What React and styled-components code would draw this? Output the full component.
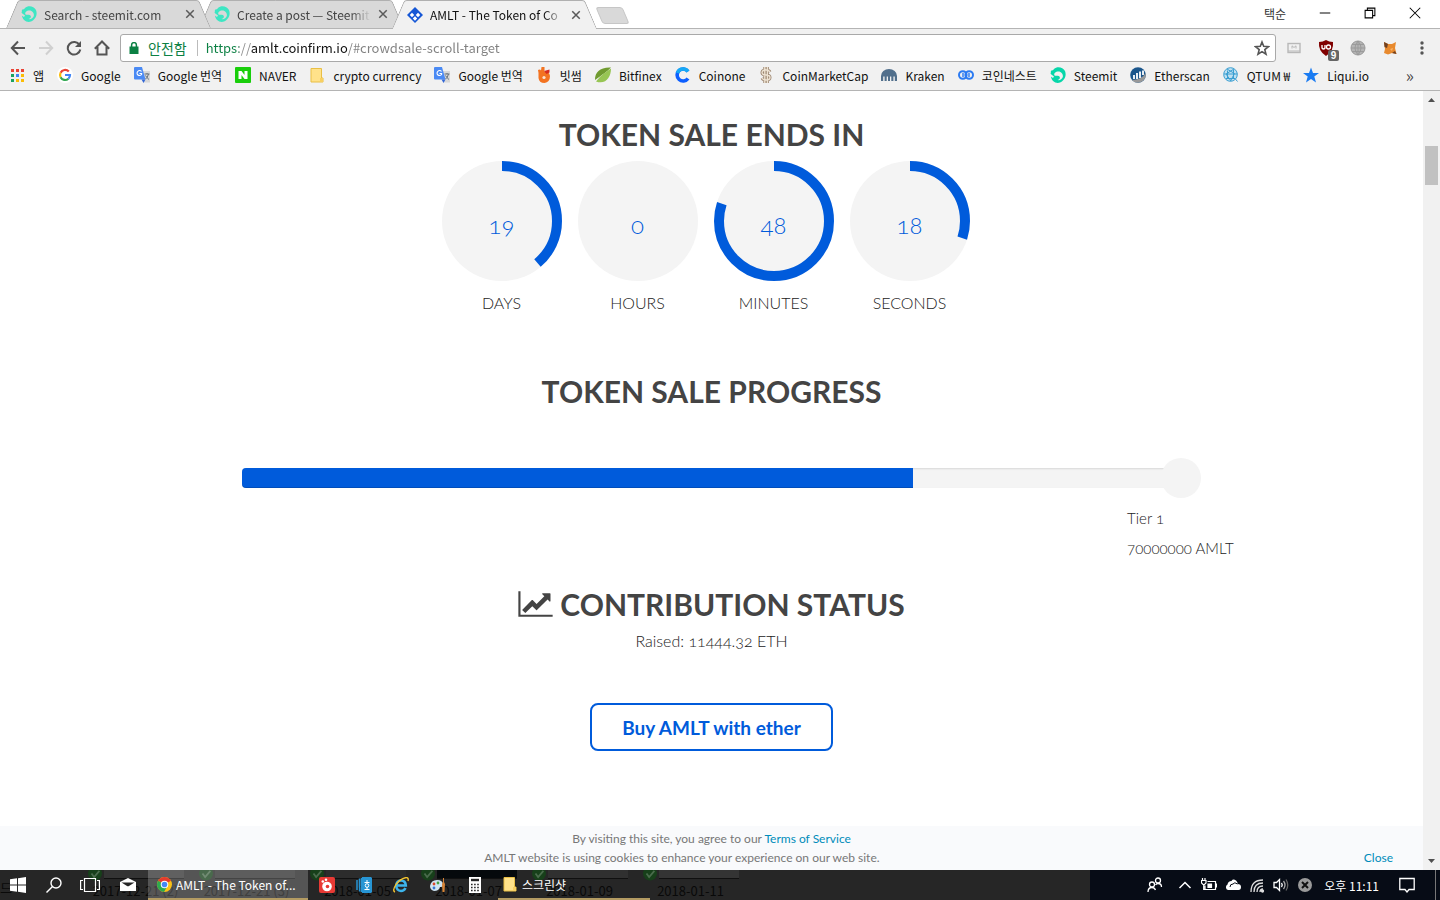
import { useState } from 'react';
import styled, { createGlobalStyle } from 'styled-components';

const uiFont = `'Noto Sans CJK KR', 'Noto Sans', sans-serif`;
const siteFont = `Lato, 'Open Sans', sans-serif`;
const blue = '#005bdb';

const GlobalStyle = createGlobalStyle`
  * { box-sizing: border-box; }
  body {
    margin: 0;
    background: #fff;
    color: #444;
    font-family: ${siteFont};
  }
  button { font: inherit; color: inherit; border: 0; background: none; padding: 0; cursor: pointer; }
  a { text-decoration: none; }
  h2, p { margin: 0; }
  svg { display: block; flex: none; }
`;

// Browser window
const Window = styled.div`
  min-height: 100vh;
  display: flex;
  flex-direction: column;
  overflow: hidden;
`;

const TabStrip = styled.div`
  display: flex;
  align-items: flex-start;
  height: 29px;
  padding-left: 12px;
  border-bottom: 1px solid #b4b4b4;
  font-family: ${uiFont};
`;

const Tab = styled.div`
  position: relative;
  isolation: isolate;
  z-index: ${(p) => p.$order};
  display: flex;
  align-items: center;
  gap: 7px;
  width: 193px;
  height: ${(p) => (p.$active ? 29 : 28)}px;
  padding: 0 10px 0 9px;
  font-size: 12px;
  color: ${(p) => (p.$active ? '#111' : '#444')};

  &::before,
  &::after {
    content: '';
    position: absolute;
    z-index: -1;
    top: 0;
    bottom: 0;
    width: 60%;
    background: ${(p) => (p.$active ? '#f1f1f1' : '#d9d9d9')};
    border-top: 1px solid #b0b0b0;
  }
  &::before {
    left: 0;
    border-left: 1px solid #a5a5a5;
    border-top-left-radius: 3px;
    transform: skewX(-23deg);
  }
  &::after {
    right: 0;
    border-right: 1px solid #a5a5a5;
    border-top-right-radius: 3px;
    transform: skewX(23deg);
  }
`;

const TabTitle = styled.span`
  flex: 1;
  overflow: hidden;
  white-space: nowrap;
  mask-image: linear-gradient(to right, #000 85%, transparent);
`;

const NewTab = styled.button`
  width: 27px;
  height: 17px;
  margin: 7px 0 0 8px;
  border: 1px solid #c6c6c6;
  border-radius: 3px;
  background: #d9d9d9;
  transform: skewX(23deg);
`;

const WindowControls = styled.div`
  display: flex;
  align-items: center;
  height: 26px;
  margin-left: auto;
  padding-right: 19px;
  gap: 33px;
  font-size: 12px;
  color: #333;
`;

const Toolbar = styled.div`
  display: flex;
  align-items: center;
  height: 33px;
  padding: 4px 10px 0;
  gap: 12px;
  background: #f1f1f1;
`;

const Omnibox = styled.div`
  flex: 1;
  display: flex;
  align-items: center;
  gap: 8px;
  height: 28px;
  margin: 0 -2px;
  padding: 0 5px 0 7px;
  border: 1px solid #a9a9a9;
  border-radius: 3px;
  background: #fff;
  font-family: ${uiFont};
  font-size: 14px;
`;

const Secure = styled.span`
  padding-right: 10px;
  border-right: 1px solid #bbb;
  line-height: 16px;
  color: #0b8043;
`;

const Address = styled.input`
  flex: 1;
  min-width: 0;
  padding: 0;
  border: 0;
  outline: 0;
  font: inherit;
  font-size: 13px;
  color: transparent;
  background: linear-gradient(to right, #0b8043 33px, #888 33px 45px, #111 45px 141px, #808080 141px) text;
`;

const Extensions = styled.div`
  display: flex;
  align-items: center;
  gap: 16px;
`;

const Shield = styled.span`
  position: relative;
`;

const Badge = styled.span`
  position: absolute;
  top: 10px;
  left: 10px;
  width: 11px;
  border-radius: 2px;
  background: #666;
  color: #fff;
  font: 700 10px/11px 'Liberation Sans', sans-serif;
  text-align: center;
`;

const Bookmarks = styled.nav`
  display: flex;
  align-items: center;
  gap: 13px;
  height: 29px;
  padding: 0 22px 2px 9px;
  background: #f1f1f1;
  border-bottom: 1px solid #b4b4b4;
  font-family: ${uiFont};
  font-size: 12px;
  white-space: nowrap;
`;

const Bookmark = styled.a`
  display: flex;
  align-items: center;
  gap: 8px;
  color: #111;
`;

const More = styled.button`
  margin: 0 4px 0 auto;
  font-size: 17px;
  line-height: 20px;
  color: #444;
`;

// Page
const Viewport = styled.div`
  flex: 1;
  display: flex;
`;

const Site = styled.div`
  flex: 1;
  display: flex;
  flex-direction: column;
`;

const Main = styled.main`
  flex: 1;
  display: flex;
  flex-direction: column;
  align-items: center;
  padding-top: 26px;
`;

const Heading = styled.h2`
  display: flex;
  align-items: center;
  gap: 7px;
  margin-top: ${(p) => p.$space}px;
  font-size: 30px;
  line-height: 34px;
  font-weight: 700;
`;

const Countdown = styled.div`
  display: flex;
  gap: 16px;
  margin-top: 10px;
  padding-right: 12px;
`;

const Unit = styled.div`
  text-align: center;
  font-size: 16px;
  font-weight: 300;
  line-height: 24px;
  color: #222;
`;

const Dial = styled.div`
  display: grid;
  place-items: center;
  width: 120px;
  height: 120px;
  margin-bottom: 10px;
  > * { grid-area: 1 / 1; }
`;

const DialValue = styled.span`
  padding-top: 8px;
  font-size: 24px;
  font-variant-numeric: oldstyle-nums;
  color: ${blue};
`;

const Progress = styled.div`
  width: 66%;
  margin-top: 60px;
`;

const Track = styled.div`
  position: relative;
  height: 20px;
  border-radius: 4px;
  background: #f4f4f4;
  box-shadow: inset 0 1px 2px rgba(0, 0, 0, 0.12);
`;

const Fill = styled.div`
  height: 100%;
  border-radius: 4px 0 0 4px;
  background: ${blue};
  box-shadow: inset 0 -1px 0 rgba(0, 0, 0, 0.15);
`;

const TierDot = styled.span`
  position: absolute;
  top: -10px;
  right: -20px;
  width: 40px;
  height: 40px;
  border-radius: 50%;
  background: #f4f4f4;
`;

const Tier = styled.div`
  width: 108px;
  margin: 15px -54px 0 auto;
  font-size: 15px;
  font-weight: 300;
  line-height: 30px;
  color: #222;
  white-space: nowrap;
  font-variant-numeric: oldstyle-nums;
`;

const Raised = styled.p`
  margin-top: 8px;
  font-size: 16px;
  font-weight: 300;
  line-height: 24px;
  color: #222;
  font-variant-numeric: oldstyle-nums;
`;

const BuyButton = styled.button`
  height: 48px;
  margin-top: 50px;
  padding: 0 30px;
  border: 2px solid ${blue};
  border-radius: 8px;
  font-size: 19px;
  font-weight: 700;
  color: ${blue};
`;

const CookieBar = styled.footer`
  padding: 3px 30px 3px 0;
  background: #f9fafc;
  font-size: 12px;
  line-height: 19px;
  color: #777;
  text-align: center;

  a, button { color: #008cba; }
`;

const CookieTerms = styled.p`
  padding-left: 30px;
`;

const CookieRow = styled.div`
  display: flex;
  p { flex: 1; }
`;

const Scrollbar = styled.div`
  display: flex;
  flex-direction: column;
  align-items: center;
  width: 17px;
  padding: 7px 0;
  background: #f1f1f1;
`;

const Thumb = styled.div`
  width: 13px;
  height: 39px;
  margin: 44px 0 auto;
  background: #c1c1c1;
`;

// Taskbar
const Taskbar = styled.div`
  position: relative;
  isolation: isolate;
  display: flex;
  height: 30px;
  background: #262626;
  color: #fff;
  font-family: ${uiFont};
  font-size: 12px;
`;

const Behind = styled.div`
  position: absolute;
  z-index: -1;
  inset: 0;
  display: flex;
  overflow: hidden;
  color: #090909;
  font-size: 13px;
  line-height: 15px;
`;

const Cell = styled.div`
  display: flex;
  flex-direction: column;
  align-items: ${(p) => (p.$first ? 'flex-start' : 'center')};
  width: ${(p) => (p.$first ? 80 : 111)}px;
  padding-top: ${(p) => (p.$first ? 10 : 0)}px;
  white-space: nowrap;
`;

const Preview = styled.div`
  display: flex;
  width: 96px;
  height: 13px;
  gap: 2px;

  &::after {
    content: '';
    flex: 1;
    height: 8px;
    background: ${(p) => p.$tone};
    border-bottom: 1px solid #101010;
  }
`;

const TaskButton = styled.button`
  display: flex;
  align-items: center;
  justify-content: center;
  width: ${(p) => (p.$wide ? 40 : 36)}px;
`;

const AppButton = styled.button`
  display: flex;
  align-items: center;
  justify-content: center;
  width: 37px;
`;

const OpenApp = styled.button`
  display: flex;
  align-items: center;
  gap: 4px;
  width: ${(p) => (p.$active ? 160 : 152)}px;
  margin-left: ${(p) => (p.$active ? 0 : 5)}px;
  padding: 0 8px 0 ${(p) => (p.$active ? 9 : 4)}px;
  border-bottom: 2px solid #b39b62;
  background: ${(p) => (p.$active ? 'rgba(255, 255, 255, 0.22)' : 'none')};
  white-space: nowrap;
`;

const Tray = styled.div`
  display: flex;
  align-items: center;
  gap: 8px;
  margin-left: auto;
  padding: 0 20px 0 57px;
  background: #070c16;
`;

const People = styled.button`
  margin-right: 6px;
`;

const Clock = styled.span`
  margin: 0 12px 0 3px;
`;

const ShowDesktop = styled.button`
  width: 5px;
  border-left: 1px solid #777;
  background: #070c16;
`;

const Stroke = ({ size = 16, color = '#555', width = 2, children }) => (
  <svg width={size} height={size} viewBox="0 0 16 16" fill="none" stroke={color} strokeWidth={width}>
    {children}
  </svg>
);

const Pic = ({ size = 16, children }) => (
  <svg width={size} height={size} viewBox="0 0 16 16">{children}</svg>
);

const SteemIcon = ({ color = '#3ee6c3', inner = '#d9d9d9' }) => (
  <Pic>
    <path d="M1 5C0 3 3 4 4 2C7-1 13 0 15 4C17 9 14 14 10 15.500C6 17 1 14 1 9C1 8 0 7 1 5Z" fill={color} />
    <path d="M4.500 8.500C3.500 6.500 5.500 4.500 8.500 4.500C11 4.500 13.500 7 12.800 10C12 12.500 9.500 13.500 7.500 13C9.500 12.500 10.500 11 9.500 9.500C8.500 8 6 9.500 4.500 8.500Z" fill={inner} />
    <path d="M0 6.500L4 9.500L3 11L0 9Z" fill={inner} />
  </Pic>
);

const AmltIcon = () => (
  <Pic>
    <path d="M8 0L16 8L8 16L0 8Z" fill="#1557d6" />
    <path d="M5 5.800L7.200 8L5 10.200L2.800 8ZM11 5.800L13.200 8L11 10.200L8.800 8ZM8 9.300L10.200 11.500L8 13.700L5.800 11.500Z" fill="#fff" />
  </Pic>
);

const CloseIcon = () => (
  <Stroke size={10} color="#5a5a5a" width={2.4}><path d="M2 2L14 14M14 2L2 14" /></Stroke>
);

const AppsIcon = () => (
  <Pic>
    {['#ea4335', '#ea4335', '#ea4335', '#1ba260', '#4285f4', '#fbbc05', '#1ba260', '#fbbc05', '#fbbc05'].map((c, i) => (
      <rect key={i} x={2 + (i % 3) * 5} y={2 + Math.floor(i / 3) * 5} width="3" height="3" fill={c} />
    ))}
  </Pic>
);

const GoogleIcon = () => (
  <Pic>
    <circle cx="8" cy="8" r="8" fill="#fff" />
    <g fill="none" strokeWidth="2.200">
      <path d="M11.800 4.600A5 5 0 0 0 3.600 5.800" stroke="#ea4335" />
      <path d="M3.600 5.800A5 5 0 0 0 3.600 10.200" stroke="#fbbc05" />
      <path d="M3.600 10.200A5 5 0 0 0 11.400 11.700" stroke="#34a853" />
      <path d="M11.400 11.700A5 5 0 0 0 13 8H8" stroke="#4285f4" />
    </g>
  </Pic>
);

const TranslateIcon = () => (
  <Pic>
    <path d="M6 4H16V15.500H10Z" fill="#d8d8d8" />
    <path d="M0 1Q0 0 1 0H8L11.500 12.500H1Q0 12.500 0 11.500Z" fill="#4a8af4" />
    <path d="M7.500 12.500H11.500L9.500 16Z" fill="#3367d6" />
    <path d="M7.500 4.500A2.500 2.500 0 1 0 7.600 7.500V6.500H5.500" fill="none" stroke="#fff" strokeWidth="1.100" />
    <path d="M10.500 7H15.500M13 6V7M14.500 7Q13.500 11 11.500 12M11.500 8.500Q13 11 15 12.500" fill="none" stroke="#68737c" />
  </Pic>
);

const NaverIcon = () => (
  <Pic>
    <rect width="16" height="16" rx="1" fill="#19ce0b" />
    <path d="M3.500 4H6.500L9.500 8V4H12.500V12H9.500L6.500 8V12H3.500Z" fill="#fff" />
  </Pic>
);

const FolderIcon = () => (
  <Pic>
    <path d="M2 1.500H12.500V11H14V15H2Z" fill="#ffe28a" stroke="#e9bf45" />
    <path d="M11 15V11H14V15Z" fill="#f8d061" />
  </Pic>
);

const BithumbIcon = () => (
  <Pic>
    <path d="M2 3Q4 2 5 3.500L5.500 0H8.500V5Q13 4 14 9Q14 15 8.500 16Q3 16 2.500 11V6Z" fill="#f37321" />
    <path d="M8 4L13.500 2.500V5.500L10.500 7Z" fill="#d62d20" />
    <circle cx="8" cy="10.500" r="1.600" fill="#fbe3d2" />
  </Pic>
);

const BitfinexIcon = () => (
  <Pic>
    <path d="M0 13C0 5 5 0 16 .500C12 5 8 7 0 13Z" fill="#709b30" />
    <path d="M1 14.500C7 7 11 5 16 1.500C16 10 11 18 1 14.500Z" fill="#97c554" />
  </Pic>
);

const CoinoneIcon = () => (
  <Stroke color="#0d5fff" width={3.6}>
    <path d="M13 4.500A6 6 0 1 0 13 11.500" />
    <path d="M2.500 6A6 6 0 0 1 13 4.500" stroke="#16a8f5" />
  </Stroke>
);

const DollarIcon = () => (
  <Pic>
    <g fill="none">
      <path d="M12 5Q11 3 8 3Q4 3 4 5.500Q4 8 8 8Q12 8 12 10.500Q12 13 8 13Q5 13 4 11M6.800 0V16M9.400 0V16" stroke="#9b8570" strokeWidth="3" />
      <path d="M12 5Q11 3 8 3Q4 3 4 5.500Q4 8 8 8Q12 8 12 10.500Q12 13 8 13Q5 13 4 11M6.800 0V16M9.400 0V16" stroke="#eee3d2" strokeWidth="1.400" />
    </g>
  </Pic>
);

const KrakenIcon = () => (
  <Pic>
    <path d="M0 14V9A8 7 0 0 1 16 9V14H13.800V9.500H12.400V14H10.300V9.500H9V14H7V9.500H5.700V14H3.600V9.500H2.200V14Z" fill="#516f8c" />
  </Pic>
);

const CoinnestIcon = () => (
  <Stroke color="#2c7bf2" width={2}>
    <circle cx="4.800" cy="8" r="3.800" /><circle cx="11.200" cy="8" r="3.800" /><path d="M5 6V10M11 6V10" strokeWidth="1.400" />
  </Stroke>
);

const EtherscanIcon = () => (
  <Pic>
    <circle cx="8" cy="8" r="7.800" fill="#1b568c" />
    <path d="M1 13Q12 13 15.500 6Q17 12 11 15Q5 17 2 13Z" fill="#999" />
    <path d="M4 8V12M7 6V12M10 4.500V11M13 3.500V8" stroke="#fff" strokeWidth="1.800" />
  </Pic>
);

const GlobeLines = ({ fill, line }) => (
  <Pic>
    <circle cx="8" cy="8" r="7" fill={fill} stroke={line} />
    <path d="M1 8H15M2 4.500H14M2 11.500H14M8 1V15M8 1Q2 8 8 15M8 1Q14 8 8 15" fill="none" stroke={line} strokeWidth=".900" />
  </Pic>
);

const QtumIcon = () => (
  <Pic>
    <circle cx="7.500" cy="7.500" r="6.800" fill="#bfe0f1" stroke="#3b9fd2" />
    <path d="M4 2L11.500 6.500L7.500 14M11 2L3 7L8 14M1 7H14.500M3 11.500H12L14.500 14.500M4.500 3.500V12M10.500 3V12" fill="none" stroke="#3b9fd2" />
  </Pic>
);

const StarIcon = () => (
  <Pic><path d="M8 .500L10 6H16L11.300 9.500L13 15.500L8 12L3 15.500L4.700 9.500L0 6H6Z" fill="#1a7bf2" /></Pic>
);

const ChromeIcon = () => (
  <Pic size={15}>
    <circle cx="8" cy="8" r="8" fill="#fbc116" />
    <path d="M8 8L1.100 4A8 8 0 0 1 14.900 4Z" fill="#e33b2e" />
    <path d="M8 8L1.100 4A8 8 0 0 0 7.500 16L11 9.500Z" fill="#2da94f" />
    <circle cx="8" cy="8" r="4" fill="#fff" />
    <circle cx="8" cy="8" r="3" fill="#4587f3" />
  </Pic>
);

const ChartIcon = () => (
  <svg width="35" height="30" viewBox="0 0 2048 1792" fill="#444">
    <path d="M2048 1536v128h-2048v-1536h128v1408h1920zm-128-1248v435q0 21-19.500 29.500t-35.500-7.500l-121-121-633 633q-10 10-23 10t-23-10l-233-233-416 416-192-192 585-585q10-10 23-10t23 10l233 233 464-464-121-121q-16-16-7.500-35.500t29.500-19.500h435q14 0 23 9t9 23z" />
  </svg>
);

const CheckBadge = () => (
  <Pic size={14}>
    <circle cx="8" cy="4" r="8" fill="#17401a" />
    <path d="M4 4L7 8L13 1" fill="none" stroke="#4a6b4c" strokeWidth="2" />
  </Pic>
);

const tabs = [
  { title: 'Search - steemit.com', icon: <SteemIcon /> },
  { title: 'Create a post — Steemit', icon: <SteemIcon /> },
  { title: 'AMLT - The Token of Co', icon: <AmltIcon />, active: true },
];

const bookmarks = [
  ['앱', <AppsIcon />],
  ['Google', <GoogleIcon />],
  ['Google 번역', <TranslateIcon />],
  ['NAVER', <NaverIcon />],
  ['crypto currency', <FolderIcon />],
  ['Google 번역', <TranslateIcon />],
  ['빗썸', <BithumbIcon />],
  ['Bitfinex', <BitfinexIcon />],
  ['Coinone', <CoinoneIcon />],
  ['CoinMarketCap', <DollarIcon />],
  ['Kraken', <KrakenIcon />],
  ['코인네스트', <CoinnestIcon />],
  ['Steemit', <SteemIcon color="#06d6a9" inner="#f1f1f1" />],
  ['Etherscan', <EtherscanIcon />],
  ['QTUM ₩', <QtumIcon />],
  ['Liqui.io', <StarIcon />],
];

const units = [
  { label: 'DAYS', value: 19, max: 49 },
  { label: 'HOURS', value: 0, max: 24 },
  { label: 'MINUTES', value: 48, max: 60 },
  { label: 'SECONDS', value: 18, max: 60 },
];

const files = [
  ['2017-12-21 (2)', '#343434'],
  ['2017-12-21 (3)', '#303030'],
  ['2018-01-05', '#2c2c2c'],
  ['2018-01-07', '#05090c'],
  ['2018-01-09', '#303030'],
  ['2018-01-11', '#343434'],
];

// circumference of the r=55 ring
const ring = 2 * Math.PI * 55;

const App = () => {
  const [url, setUrl] = useState('https://amlt.coinfirm.io/#crowdsale-scroll-target');
  const [showCookies, setShowCookies] = useState(true);

  return (
    <Window>
      <GlobalStyle />
      <TabStrip>
        {tabs.map((tab, i) => (
          <Tab key={tab.title} $active={tab.active} $order={tab.active ? 5 : 3 - i}>
            {tab.icon}
            <TabTitle>{tab.title}</TabTitle>
            <button aria-label="Close tab"><CloseIcon /></button>
          </Tab>
        ))}
        <NewTab aria-label="New tab" />
        <WindowControls>
          <span>택순</span>
          <button aria-label="Minimize"><Stroke size={12} color="#000" width={1.3}><path d="M1 8H15" /></Stroke></button>
          <button aria-label="Restore"><Stroke size={12} color="#000" width={1.4}><path d="M1.500 4.500H11.500V14.500H1.500ZM4.500 4.500V1.500H14.500V11.500H11.500" /></Stroke></button>
          <button aria-label="Close"><Stroke size={12} color="#000" width={1.4}><path d="M1 1L15 15M15 1L1 15" /></Stroke></button>
        </WindowControls>
      </TabStrip>

      <Toolbar>
        <button aria-label="Back"><Stroke><path d="M15 8H2M8 1.500L1.800 8L8 14.500" /></Stroke></button>
        <button aria-label="Forward"><Stroke color="#d0d0d0"><path d="M1 8H14M8 1.500L14.200 8L8 14.500" /></Stroke></button>
        <button aria-label="Reload"><Stroke><path d="M13.500 5A6.300 6.300 0 1 0 14.300 9.500" /><path d="M15 1V7H9Z" fill="#555" stroke="none" /></Stroke></button>
        <button aria-label="Home"><Stroke><path d="M.800 8.800L8 1.500L15.200 8.800M3.500 7V14.500H12.500V7" /></Stroke></button>
        <Omnibox>
          <Pic size={12}><path d="M2 6H14V16H2Z" fill="#0b8043" /><path d="M4.800 7V4A3.200 3.200 0 0 1 11.200 4V7" fill="none" stroke="#0b8043" strokeWidth="2" /></Pic>
          <Secure>안전함</Secure>
          <Address aria-label="Address" value={url} onChange={(e) => setUrl(e.target.value)} />
          <button aria-label="Bookmark this page"><Stroke width={1.6}><path d="M8 2L9.700 6.300L14.500 6.600L10.800 9.600L12 14.200L8 11.600L4 14.200L5.200 9.600L1.500 6.600L6.300 6.300Z" /></Stroke></button>
        </Omnibox>
        <Extensions>
          <Stroke color="#b8b8b8" width={1.4}><rect x="2" y="3.500" width="12" height="9" /><path d="M6 8.500V5.800L8 7.500L10 5.800V8.500M2 11H14" strokeWidth="1" /></Stroke>
          <Shield>
            <Pic><path d="M8 0Q11 2 15 2Q16 11 8 16Q0 11 1 2Q5 2 8 0Z" fill="#800000" /><path d="M4 5V8Q5.500 10 7 8V5" fill="none" stroke="#fff" strokeWidth="1.300" /><circle cx="10.500" cy="7" r="2" fill="none" stroke="#fff" strokeWidth="1.300" /></Pic>
            <Badge>9</Badge>
          </Shield>
          <GlobeLines fill="#b5b5b5" line="#999" />
          <Pic>
            <path d="M2 2L6 4H10L14 2L13 8L14.500 14L10 13L6 14.500L2 13L3 9Z" fill="#e88a2e" />
            <path d="M2 2L6 4L5 8L2.500 7ZM10 13L14.500 14L13 11Z" fill="#704020" />
            <path d="M8 9L11 8L10 11Z" fill="#f9b468" />
          </Pic>
          <button aria-label="Menu"><Pic><g fill="#555"><circle cx="8" cy="3" r="1.700" /><circle cx="8" cy="8" r="1.700" /><circle cx="8" cy="13" r="1.700" /></g></Pic></button>
        </Extensions>
      </Toolbar>

      <Bookmarks>
        {bookmarks.map(([name, icon], i) => (
          <Bookmark key={i} href="#">{icon}{name}</Bookmark>
        ))}
        <More aria-label="More bookmarks">»</More>
      </Bookmarks>

      <Viewport>
        <Site>
          <Main>
            <Heading $space={0}>TOKEN SALE ENDS IN</Heading>
            <Countdown>
              {units.map((u) => (
                <Unit key={u.label}>
                  <Dial>
                    <svg width="120" height="120" viewBox="0 0 120 120">
                      <circle cx="60" cy="60" r="60" fill="#f4f4f4" />
                      {u.value > 0 && (
                        <circle
                          cx="60" cy="60" r="55" fill="none" stroke={blue} strokeWidth="10"
                          strokeDasharray={`${(ring * u.value) / u.max} ${ring}`}
                          transform="rotate(-90 60 60)"
                        />
                      )}
                    </svg>
                    <DialValue>{u.value}</DialValue>
                  </Dial>
                  {u.label}
                </Unit>
              ))}
            </Countdown>

            <Heading $space={59}>TOKEN SALE PROGRESS</Heading>
            <Progress>
              <Track role="progressbar" aria-label="Token sale progress" aria-valuenow={71}>
                <Fill style={{ width: '71.5%' }} />
                <TierDot />
              </Track>
              <Tier>
                <p>Tier 1</p>
                <p>70000000 AMLT</p>
              </Tier>
            </Progress>

            <Heading $space={24}><ChartIcon />CONTRIBUTION STATUS</Heading>
            <Raised>Raised: 11444.32 ETH</Raised>
            <BuyButton>Buy AMLT with ether</BuyButton>
          </Main>

          {showCookies && (
            <CookieBar>
              <CookieTerms>By visiting this site, you agree to our <a href="#terms">Terms of Service</a></CookieTerms>
              <CookieRow>
                <p>AMLT website is using cookies to enhance your experience on our web site.</p>
                <button onClick={() => setShowCookies(false)}>Close</button>
              </CookieRow>
            </CookieBar>
          )}
        </Site>
        <Scrollbar>
          <svg width="7" height="4" viewBox="0 0 7 4"><path d="M0 4L3.500 0L7 4Z" fill="#505050" /></svg>
          <Thumb />
          <svg width="7" height="4" viewBox="0 0 7 4"><path d="M0 0L3.500 4L7 0Z" fill="#505050" /></svg>
        </Scrollbar>
      </Viewport>

      <Taskbar>
        <Behind aria-hidden="true">
          <Cell $first>드</Cell>
          {files.map(([name, tone]) => (
            <Cell key={name}>
              <Preview $tone={tone}><CheckBadge /></Preview>
              {name}
            </Cell>
          ))}
        </Behind>
        <TaskButton aria-label="Start"><Pic><path d="M0 2.300L7 1.300V7.500H0ZM8 1.200L16 0V7.500H8ZM0 8.500H7V14.700L0 13.700ZM8 8.500H16V16L8 14.800Z" fill="#fff" /></Pic></TaskButton>
        <TaskButton aria-label="Search"><Stroke color="#fff" width={1.4}><circle cx="10" cy="6" r="5" /><path d="M6.500 9.500L.500 15.500" /></Stroke></TaskButton>
        <TaskButton aria-label="Task view">
          <svg width="20" height="16" viewBox="0 0 20 16" fill="none" stroke="#fff" strokeWidth="1.200"><path d="M4.500 1.500H15.500V14.500H4.500ZM3 3.500H.600V12.500H3M17 3.500H19.400V12.500H17" /></svg>
        </TaskButton>
        <TaskButton $wide aria-label="Mail"><Pic><path d="M0 5L8 1L16 5V14H0Z" fill="#fff" /><path d="M1.500 5.500H14.500L9 9Q8 9.500 7 9Z" fill="#262626" /></Pic></TaskButton>
        <OpenApp $active><ChromeIcon />AMLT - The Token of...</OpenApp>
        <AppButton aria-label="Capture">
          <Pic><rect width="16" height="16" rx="2" fill="#e83a35" /><circle cx="8" cy="9.500" r="4.800" fill="#fff" /><circle cx="8.500" cy="9.500" r="1.800" fill="#e83a35" /><circle cx="3.800" cy="4.500" r="1.300" fill="#fff" /><circle cx="7" cy="2.800" r="1.300" fill="#fff" /></Pic>
        </AppButton>
        <AppButton aria-label="Cards">
          <Pic><path d="M6 0H15L16 1V15L15 16H6Z" fill="#2795d4" /><path d="M1 3V13M3.500 1.500V14.500M5.500 1V15" stroke="#2795d4" strokeWidth="1.500" /><path d="M11 3V5M8.500 5.500H13.500M11 10V12M8.500 12.500H13.500" stroke="#fff" /><circle cx="11" cy="8.500" r="1.800" fill="none" stroke="#fff" /></Pic>
        </AppButton>
        <AppButton aria-label="Internet Explorer">
          <Pic><path d="M12.500 11Q11 14 8 14Q3.500 13.500 3.200 9Q3.500 3.500 8 3.500Q12.500 3.500 12.800 8.500H4" fill="none" stroke="#3db5ec" strokeWidth="2.600" /><path d="M2 15Q-1 14 3 7.500Q7 2 12.500 .800Q16 0 15 4" fill="none" stroke="#f4c430" strokeWidth="1.400" /></Pic>
        </AppButton>
        <AppButton aria-label="Paint">
          <Pic><path d="M0 9Q1 3 7 3Q13 3 13 8Q13 10 10 10Q9 14 4 14Q0 13 0 9Z" fill="#cfe4f2" /><circle cx="4" cy="7" r="1.400" fill="#d9472b" /><circle cx="8" cy="6" r="1.400" fill="#45a045" /><circle cx="4" cy="11" r="1.400" fill="#3977d0" /><path d="M13 1V5L12 7L12.500 15H14.500L15 7L14 5V1Z" fill="#d58337" /></Pic>
        </AppButton>
        <AppButton aria-label="Calculator">
          <Pic><path d="M2 0H14V16H2Z" fill="#fff" /><path d="M4 3H12" stroke="#262626" strokeWidth="2.400" /><path d="M4 7.500H12M4 10.500H12M4 13.500H12" stroke="#262626" strokeWidth="1.500" strokeDasharray="1.600 1.500" /></Pic>
        </AppButton>
        <OpenApp><FolderIcon />스크린샷</OpenApp>
        <Tray>
          <People aria-label="People"><Stroke color="#fff" width={1.3}><circle cx="5" cy="7.500" r="2.500" /><circle cx="11" cy="3.500" r="2.500" /><path d="M1 15Q1 10.500 5 10.500Q7.500 10.500 8.500 13M8.500 8Q9.500 6.500 11 6.500Q14.500 6.500 14.500 10" /></Stroke></People>
          <Stroke color="#fff" width={1.5}><path d="M2.500 11L8 5.500L13.500 11" /></Stroke>
          <Stroke color="#fff" width={1.2}><path d="M6.500 4.500H14.500V12.500H4V8.500M14.500 7H15.500V10H14.500M1.500 1V3.500M4 1V3.500M.500 3.500H5V6L3.500 7.500H2L.500 6ZM2.700 7.500V12.500H4" /><path d="M7 7H10.500V10.500H7Z" fill="#fff" /></Stroke>
          <Pic><path d="M3 13A3 3 0 0 1 2.500 7.500Q3 4 6.500 4Q8 1.500 11 3.500Q13 5 12.500 7Q16 7 16 10Q16 13 13.500 13Z" fill="#fff" /><path d="M5 10Q5 7 8 7Q9.500 4.500 12.500 7" fill="none" stroke="#070c16" /></Pic>
          <Stroke color="#ddd" width={1.3}><path d="M2 15Q2 3 14 3M5 15Q5 6 14 6M8 15Q8 9 14 9M11 15Q11 12 14 12" /><circle cx="13.500" cy="14" r="1" fill="#fff" /></Stroke>
          <Stroke color="#fff" width={1.3}><path d="M1 5.500H3.500L6.500 2.500V13.500L3.500 10.500H1Z" /><path d="M8.500 6Q10 8 8.500 10" /><path d="M10.500 4Q13.500 8 10.500 12" stroke="#aaa" /><path d="M13 2.500Q16.500 8 13 13.500" stroke="#666" /></Stroke>
          <Pic><circle cx="8" cy="8" r="7" fill="#9a9a9a" /><path d="M5 5L11 11M11 5L5 11" stroke="#111" strokeWidth="2" /></Pic>
          <Clock>오후 11:11</Clock>
          <Stroke color="#fff" width={1.3}><path d="M.800 1.500H15.200V12.500H10L8 15L6 12.500H.800Z" /></Stroke>
        </Tray>
        <ShowDesktop aria-label="Show desktop" />
      </Taskbar>
    </Window>
  );
};

export default App;
